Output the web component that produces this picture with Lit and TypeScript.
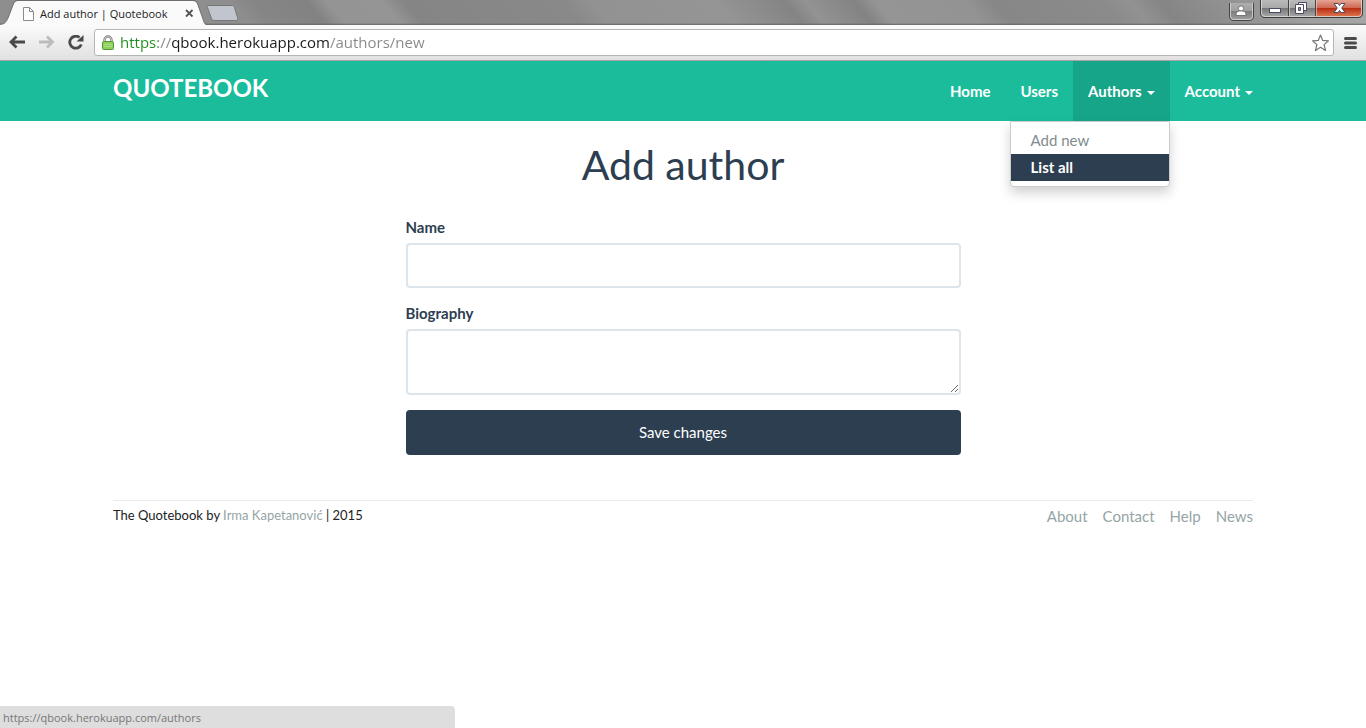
import { LitElement, html, css, svg } from "lit";
import { customElement, property, state } from "lit/decorators.js";

@customElement("browser-chrome")
class BrowserChrome extends LitElement {
  @property() title = "";
  @property() url = "";

  static styles = css`
    :host {
      display: block;
      font-family: "Open Sans", "Noto Sans", sans-serif;
    }
    button {
      border: 0;
      padding: 0;
      margin: 0;
      background: none;
      font: inherit;
      display: block;
    }
    svg {
      display: block;
    }
    .strip {
      display: flex;
      height: 25px;
      background: linear-gradient(to bottom, rgba(90, 86, 88, 0) 23px, #666364 25px),
        linear-gradient(50deg, #8e8e8e 0 18%, #868686 19.5%, #828282 23.5%, #949494 25%, #959595 29%, #858585 30.5%, #898989 42%, #929292 44%, #959595 53%, #848484 58%, #939393 59.5%, #838383 63%, #959595 64.5%, #939393 71%, #878787 73%, #8b8b8b 81%, #929292 83%, #858585 85%, #8d8d8d 88%, #a0a0a0 95%, #a8a8a8);
    }
    .tab {
      display: grid;
      width: 206px;
      height: 25px;
    }
    .tab > * {
      grid-area: 1 / 1;
    }
    .tab-content {
      display: flex;
      align-items: center;
      padding: 2px 12px 0 22px;
      font-size: 11px;
      line-height: 20px;
      color: #222;
    }
    .tab-title {
      flex: 1;
      padding-left: 5px;
      white-space: nowrap;
    }
    .new-tab {
      padding-top: 5px;
      align-self: flex-start;
    }
    .window {
      display: flex;
      gap: 6px;
      margin-left: auto;
      padding-right: 3px;
    }
    .toolbar {
      display: flex;
      align-items: center;
      height: 35px;
      padding: 0 8px;
      background: linear-gradient(#fbfbfb, #e2e0e1);
      border-bottom: 1px solid #a8a6a7;
    }
    .nav {
      display: flex;
      gap: 9px;
      padding-right: 8px;
    }
    .address {
      flex: 1;
      display: flex;
      align-items: center;
      height: 25px;
      padding: 0 4px 0 6px;
      background: #fff;
      border: 1px solid #b5b5b5;
      border-radius: 3px;
      margin-right: 8px;
    }
    .url {
      flex: 1;
      min-width: 0;
      height: 21px;
      border: 0;
      padding: 0;
      margin: 0 5px 2px;
      outline: 0;
      font: 15px "Open Sans", "Noto Sans", sans-serif;
      color: #222;
      -webkit-text-fill-color: transparent;
      background: linear-gradient(to right, #1c8c1c 0 38px, #888 38px 52px, #1a1a1a 52px 210px, #888 210px);
      background-clip: text;
      -webkit-background-clip: text;
    }
  `;

  private winButton(x: number, w: number, danger = false) {
    const fill = danger ? "url(#red)" : "url(#grey)";
    return svg`<rect x=${x} y="0" width=${w} height="17" fill=${fill}></rect>`;
  }

  render() {
    return html`
      <div class="strip">
        <div class="tab">
          <svg width="206" height="25" viewBox="0 0 206 25">
            <path d="M0 25 V24 C5 24 6 22 8 18 L13 5 C14 2 15 1 18 1 H193 C196 1 197 2 198 5 L203 19 C204 23 205 24 206 25Z" fill="#fafafa"></path>
            <path d="M0 24.500 C5 24 6 22 8 18 L13 5 C14 2 15 .5 18 .5 H193 C196 .5 197 2 198 5 L203 19 C204 23 205 24 206 24.500" fill="none" stroke="#6e6e6e"></path>
          </svg>
          <div class="tab-content">
            <svg width="13" height="14" viewBox="0 0 13 14">
              <path d="M1.500 .5 H7.500 L11.500 4.500 V13.500 H1.500Z" fill="#fdfdfd" stroke="#8a8a8a"></path>
              <path d="M7.500 .5 V4.500 H11.500" fill="none" stroke="#8a8a8a"></path>
            </svg>
            <span class="tab-title">${this.title}</span>
            <button aria-label="Close tab">
              <svg width="9" height="9" viewBox="0 0 9 9"><path d="M1 1 L7.500 7.500 M7.500 1 L1 7.500" stroke="#555" stroke-width="1.800"></path></svg>
            </button>
          </div>
        </div>
        <button class="new-tab" aria-label="New tab">
          <svg width="33" height="16" viewBox="0 0 33 16">
            <path d="M3 .5 H25 C27 .5 28 1 28.500 2.500 L31.500 12.500 C32 14.500 31.500 15.500 30 15.500 H9 C7 15.500 6 15 5.500 13.500 L1.500 2.500 C1 1 1.500 .5 3 .5Z" fill="#c0c5ce" stroke="#777"></path>
          </svg>
        </button>
        <div class="window">
          <button aria-label="User">
            <svg width="25" height="19" viewBox="0 0 25 19">
              <defs><linearGradient id="u" x1="0" y1="0" x2="0" y2="1"><stop offset="0" stop-color="#b0b0b0"></stop><stop offset=".5" stop-color="#a0a0a0"></stop><stop offset=".5" stop-color="#7a7a7a"></stop><stop offset="1" stop-color="#a0a0a0"></stop></linearGradient></defs>
              <path d="M.5 -2 V13 Q.5 17.500 5 17.500 H20 Q24.500 17.500 24.500 13 V-2Z" fill="url(#u)" stroke="#444"></path>
              <path d="M1.500 -2 V13 Q1.500 16.500 5 16.500 H20 Q23.500 16.500 23.500 13 V-2" fill="none" stroke="#ccc"></path>
              <circle cx="12" cy="5.500" r="2.600" fill="#fff" stroke="#555" stroke-width=".7"></circle>
              <path d="M7 12.500 V11 Q7.500 8 10.500 8 H13.500 Q16.500 8 17 11 V12.500Z" fill="#fff" stroke="#555" stroke-width=".7"></path>
            </svg>
          </button>
          <svg width="103" height="19" viewBox="0 0 103 19" role="img" aria-label="Minimize, restore, close">
            <defs>
              <linearGradient id="grey" x1="0" y1="0" x2="0" y2="1"><stop offset="0" stop-color="#bbb"></stop><stop offset=".5" stop-color="#a6a6a6"></stop><stop offset=".5" stop-color="#777"></stop><stop offset="1" stop-color="#aaa"></stop></linearGradient>
              <linearGradient id="red" x1="0" y1="0" x2="0" y2="1"><stop offset="0" stop-color="#e5a493"></stop><stop offset=".45" stop-color="#cf6a53"></stop><stop offset=".5" stop-color="#b92f14"></stop><stop offset="1" stop-color="#e07a52"></stop></linearGradient>
              <clipPath id="frame"><path d="M0 0 H103 V13 Q103 18 98 18 H5 Q0 18 0 13Z"></path></clipPath>
            </defs>
            <g clip-path="url(#frame)">
              ${this.winButton(0, 28)}${this.winButton(28, 27)}${this.winButton(55, 48, true)}
            </g>
            <path d="M28.500 0 V17 M55.500 0 V17" stroke="#444"></path>
            <path d="M29.500 0 V16 M56.500 0 V16" stroke="#ddd" stroke-opacity=".6"></path>
            <path d="M.5 -1 V13 Q.5 17.500 5 17.500 H98 Q102.500 17.500 102.500 13 V-1" fill="none" stroke="#3c3c3c"></path>
            <path d="M1.500 -1 V13 Q1.500 16.500 5 16.500 H98 Q101.500 16.500 101.500 13 V-1" fill="none" stroke="#ddd" stroke-opacity=".8"></path>
            <rect x="9.500" y="8.500" width="11" height="4" fill="#fff" stroke="#4a4d60"></rect>
            <path d="M38.500 2.500 H46.500 V10.500 H38.500Z" fill="#fff" stroke="#4a4d60"></path>
            <path d="M35.500 4.500 H43.500 V13.500 H35.500Z" fill="#fff" stroke="#4a4d60"></path>
            <path d="M38.500 7.500 H40.500 V10.500 H38.500Z" fill="#999" stroke="#4a4d60"></path>
            <path d="M74 3.500 H78 L79.500 5.500 L81 3.500 H85 L81.700 8 L85 12.500 H81 L79.500 10.500 L78 12.500 H74 L77.300 8Z" fill="#fff" stroke="#4a4d60"></path>
          </svg>
        </div>
      </div>
      <div class="toolbar">
        <div class="nav">
          <button aria-label="Back">
            <svg width="18" height="16" viewBox="0 0 18 16"><path d="M8.500 1.500 L3 7 L8.500 12.500 M3 7 H17" fill="none" stroke="#4a4a4a" stroke-width="2.800"></path></svg>
          </button>
          <button aria-label="Forward">
            <svg width="22" height="16" viewBox="0 0 22 16"><path d="M12 1.500 L17.500 7 L12 12.500 M17.500 7 H4" fill="none" stroke="#bdbdbd" stroke-width="2.800"></path></svg>
          </button>
          <button aria-label="Reload">
            <svg width="20" height="16" viewBox="0 0 20 16">
              <path d="M15.300 9.500 A6 6 0 1 1 13.500 2.500" fill="none" stroke="#4a4a4a" stroke-width="2.800"></path>
              <path d="M17.500 0 V6.500 H10.500Z" fill="#4a4a4a"></path>
            </svg>
          </button>
        </div>
        <div class="address">
          <svg width="14" height="16" viewBox="0 0 14 16">
            <path d="M3.500 8 V5 A3.500 3.500 0 0 1 10.500 5 V8" fill="none" stroke="#808080" stroke-width="2.400"></path>
            <path d="M3.500 8 V5 A3.500 3.500 0 0 1 10.500 5 V8" fill="none" stroke="#ddd" stroke-width=".8"></path>
            <rect x="1.500" y="6.500" width="11" height="8" rx="1" fill="#8fd05c" stroke="#4f9a35"></rect>
            <path d="M3 9.500 H11 M3 11.500 H11" stroke="#a9de80"></path>
          </svg>
          <input class="url" type="text" aria-label="Address" spellcheck="false" .value=${this.url} />
          <button aria-label="Bookmark">
            <svg width="18" height="18" viewBox="0 0 18 18"><path d="M9.500 1 L11.700 6.400 L17.500 6.800 L13.100 10.600 L14.500 16.500 L9.500 13.300 L4.500 16.500 L5.900 10.600 L1.500 6.800 L7.300 6.400Z" fill="#fff" stroke="#777" stroke-width="1.200" stroke-linejoin="round"></path></svg>
          </button>
        </div>
        <button aria-label="Menu">
          <svg width="16" height="14" viewBox="0 0 16 14"><path d="M3.500 2.500 H13.500 M3.500 7 H13.500 M3.500 11.500 H13.500" stroke="#4a4a4a" stroke-width="3" stroke-linecap="round"></path></svg>
        </button>
      </div>
    `;
  }
}

@customElement("app-root")
class AppRoot extends LitElement {
  @state() private menuOpen = true;

  static styles = css`
    :host {
      display: block;
      min-height: 100vh;
      background: #fff;
      color: #2c3e50;
      font: 15px/21px Lato, sans-serif;
    }
    * {
      box-sizing: border-box;
    }
    a {
      text-decoration: none;
      color: inherit;
    }
    .container {
      max-width: 1140px;
      margin: 0 auto;
    }
    .navbar {
      background: #1abc9c;
      color: #fff;
    }
    .navbar .container {
      display: flex;
      justify-content: space-between;
    }
    .logo {
      font-size: 24px;
      font-weight: 700;
      line-height: 54px;
    }
    .menu {
      display: flex;
      list-style: none;
      margin: 0;
      padding: 0;
    }
    .item {
      position: relative;
    }
    .link {
      display: flex;
      align-items: center;
      gap: 5px;
      height: 60px;
      padding: 0 15px;
      border: 0;
      margin: 0;
      background: none;
      color: #fff;
      font: 700 15px/21px Lato, sans-serif;
    }
    .item:last-child .link {
      padding-right: 0;
    }
    .open {
      background: #16a588;
    }
    .caret {
      border: 4px solid transparent;
      border-top-color: currentColor;
      border-bottom: 0;
      margin-top: 3px;
    }
    .dropdown {
      position: absolute;
      top: 100%;
      right: 0;
      z-index: 2;
      width: 160px;
      margin: 0;
      padding: 5px 0;
      list-style: none;
      background: #fff;
      border: 1px solid #ccc;
      border-radius: 0 0 4px 4px;
      box-shadow: 0 6px 12px rgba(0, 0, 0, 0.18);
    }
    .option {
      display: block;
      padding: 3px 20px;
      color: #7f8c8d;
    }
    .current {
      background: #2c3e50;
      color: #fff;
      font-weight: 700;
    }
    .title {
      margin: 0;
      padding: 20px 0 28px;
      text-align: center;
      font-size: 41px;
      font-weight: 400;
      line-height: 48px;
    }
    .form {
      display: flex;
      flex-direction: column;
      max-width: 555px;
      margin: 0 auto;
    }
    .label {
      font-weight: 700;
      margin-bottom: 5px;
    }
    .field {
      width: 100%;
      height: 45px;
      margin: 0 0 15px;
      padding: 10px 15px;
      border: 2px solid #dce4ec;
      border-radius: 4px;
      font: inherit;
      color: inherit;
      background: #fff;
    }
    .area {
      height: 66px;
      resize: vertical;
    }
    .save {
      height: 45px;
      border: 0;
      border-radius: 4px;
      background: #2c3e50;
      color: #fff;
      font: 15px/21px Lato, sans-serif;
    }
    .footer {
      display: flex;
      justify-content: space-between;
      margin-top: 45px;
      padding-top: 5px;
      border-top: 1px solid #eaeaea;
      color: #222;
    }
    .credit {
      font-size: 13px;
      line-height: 19px;
    }
    .credit a,
    .links {
      color: #95a5a6;
    }
    .links {
      display: flex;
      gap: 15px;
    }
    .status {
      position: fixed;
      left: 0;
      bottom: 0;
      width: 33.3%;
      padding: 2px 3px 0;
      background: #dedede;
      border-top-right-radius: 4px;
      color: #777;
      font: 11px/20px "Open Sans", "Noto Sans", sans-serif;
    }
  `;

  private toggle() {
    this.menuOpen = !this.menuOpen;
  }

  render() {
    return html`
      <browser-chrome title="Add author | Quotebook" url="https://qbook.herokuapp.com/authors/new"></browser-chrome>
      <header class="navbar">
        <div class="container">
          <a class="logo" href="#">QUOTEBOOK</a>
          <ul class="menu">
            <li class="item"><a class="link" href="#">Home</a></li>
            <li class="item"><a class="link" href="#">Users</a></li>
            <li class="item">
              <button class="link ${this.menuOpen ? "open" : ""}" aria-expanded=${this.menuOpen} @click=${this.toggle}>
                Authors <span class="caret"></span>
              </button>
              ${this.menuOpen
                ? html`<ul class="dropdown">
                    <li><a class="option" href="#">Add new</a></li>
                    <li><a class="option current" href="#">List all</a></li>
                  </ul>`
                : ""}
            </li>
            <li class="item"><button class="link">Account <span class="caret"></span></button></li>
          </ul>
        </div>
      </header>
      <main class="container">
        <h1 class="title">Add author</h1>
        <form class="form" @submit=${(e: Event) => e.preventDefault()}>
          <label class="label" for="name">Name</label>
          <input class="field" id="name" type="text" />
          <label class="label" for="bio">Biography</label>
          <textarea class="field area" id="bio"></textarea>
          <button class="save" type="submit">Save changes</button>
        </form>
        <footer class="footer">
          <span class="credit">The Quotebook by <a href="#">Irma Kapetanović</a> | 2015</span>
          <nav class="links">
            <a href="#">About</a><a href="#">Contact</a><a href="#">Help</a><a href="#">News</a>
          </nav>
        </footer>
      </main>
      <div class="status">https://qbook.herokuapp.com/authors</div>
    `;
  }
}
